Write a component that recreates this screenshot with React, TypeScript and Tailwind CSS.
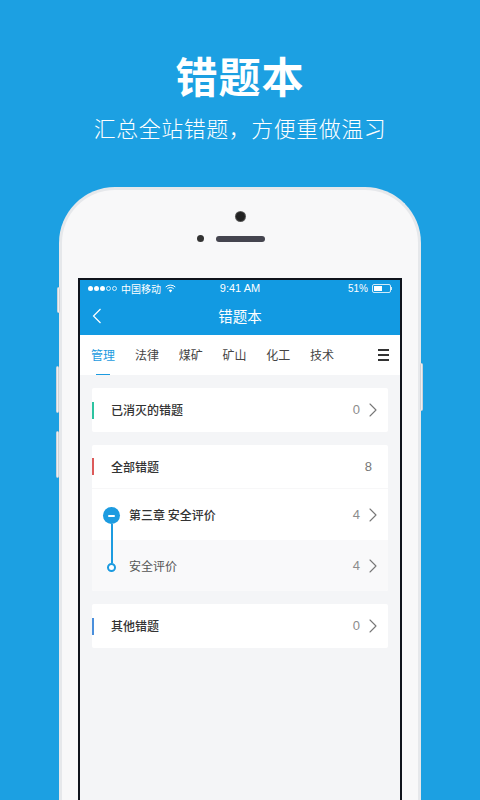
import { ChevronRight } from "lucide-react"

const font = { fontFamily: '"Noto Sans CJK SC", sans-serif' }
const tabs = ["法律", "煤矿", "矿山", "化工", "技术"]

function Arrow() {
  return <ChevronRight size={24} strokeWidth={1.1} className="ml-px mr-[3px] shrink-0 text-[#777]" />
}

function Row({ bar, title, count }: { bar: string; title: string; count: string }) {
  return (
    <div className="flex h-[44px] items-center rounded-[2px] bg-white">
      <span className={`h-[17px] w-[2px] ${bar}`} />
      <span className="ml-[17px] flex-1 text-[12px] font-medium text-[#333]">{title}</span>
      <span className="font-['Liberation_Sans',sans-serif] text-[13px] text-[#8c8c8c]">{count}</span>
      <Arrow />
    </div>
  )
}

function SideButton({ className }: { className: string }) {
  return <div className={`absolute w-[3px] rounded-[2px] border border-[#cfd3d8] bg-[#eef0f2] ${className}`} />
}

export default function App() {
  return (
    <div className="flex h-[800px] w-[480px] flex-col items-center overflow-hidden bg-[#1ca0e2]" style={font}>
      <h1 className="mt-[45px] text-[42px] leading-[60px] font-bold tracking-[1px] text-white">错题本</h1>
      <p className="mt-[7px] text-[22px] leading-[30px] font-light tracking-[0.5px] whitespace-nowrap text-white">
        {"汇总全站错题\uFF0C方便重做温习"}
      </p>

      <div className="relative mt-[45px] flex w-[362px] flex-1 flex-col items-center rounded-t-[56px] border-[3px] border-b-0 border-[#e6e8eb] bg-[#f8f8f9]">
        <SideButton className="-left-[5px] top-[97px] h-[26px]" />
        <SideButton className="-left-[6px] top-[176px] h-[47px]" />
        <SideButton className="-left-[6px] top-[241px] h-[47px]" />
        <SideButton className="-right-[5px] top-[173px] h-[48px]" />

        <div className="mt-[22px] size-[9px] rounded-full bg-[#222] ring-1 ring-[#555]" />
        <div className="relative mt-[15px] h-[6px] w-[49px] rounded-full bg-[#45454f]">
          <div className="absolute -left-[19px] top-[-1px] size-[7px] rounded-full bg-[#333]" />
        </div>

        <div className="mt-[36px] flex w-[324px] flex-1 flex-col border-x-2 border-t-2 border-[#10141c] bg-[#f4f5f7]">
          <div className="bg-[#129ae2] text-white">
            <div className="flex h-[17px] items-center px-[8px] text-[10px]">
              <div className="flex w-[104px] items-center">
                <span className="flex gap-[1px]">
                  <i className="size-[5px] rounded-full bg-white" />
                  <i className="size-[5px] rounded-full bg-white" />
                  <i className="size-[5px] rounded-full bg-white" />
                  <i className="size-[5px] rounded-full border border-white/80" />
                  <i className="size-[5px] rounded-full border border-white/80" />
                </span>
                <span className="ml-[4px] whitespace-nowrap">中国移动</span>
                <svg width="11" height="9" viewBox="0 0 11 9" fill="none" stroke="white" className="ml-[4px]">
                  <path d="M.7 3a7 7 0 0 1 9.6 0M2.3 4.8a4.6 4.6 0 0 1 6.4 0" />
                  <path d="M3.8 6.4a2.4 2.4 0 0 1 3.4 0L5.5 8.4z" fill="white" stroke="none" />
                </svg>
              </div>
              <span className="flex-1 text-center font-['Liberation_Sans',sans-serif] text-[11px]">9:41 AM</span>
              <div className="flex w-[104px] items-center justify-end">
                <span className="font-['Liberation_Sans',sans-serif]">51%</span>
                <span className="ml-[4px] h-[9px] w-[19px] rounded-[2px] border border-white/80 p-[1px]">
                  <span className="block h-full w-[8px] bg-white" />
                </span>
                <span className="h-[3px] w-[1px] bg-white/80" />
              </div>
            </div>
            <div className="relative flex h-[38px] items-center justify-center text-[14.5px]">
              <svg width="10" height="16" viewBox="0 0 10 16" fill="none" stroke="white" strokeWidth="1.2" className="absolute left-[12px] top-[11px]">
                <path d="M8.5 1 1.5 8l7 7" />
              </svg>
              错题本
            </div>
          </div>

          <div className="flex h-[40px] shrink-0 items-center bg-white pl-[11px] text-[12px] text-[#444]">
            <div className="relative mr-[20px] text-[#1c9be0]">
              管理
              <span className="absolute -bottom-[11px] left-[5px] h-[1.5px] w-[14px] bg-[#1c9be0]" />
            </div>
            {tabs.map((t) => (
              <span key={t} className="mr-[19.75px]">{t}</span>
            ))}
            <span className="ml-auto mr-[11px] flex w-[11px] flex-col gap-[3.5px]">
              <i className="h-[1.5px] bg-[#333]" />
              <i className="h-[1.5px] bg-[#333]" />
              <i className="h-[1.5px] bg-[#333]" />
            </span>
          </div>

          <div className="flex flex-col gap-[13px] px-[12px] pt-[13px]">
            <Row bar="bg-[#2cc3a0]" title="已消灭的错题" count="0" />

            <div className="overflow-hidden rounded-[2px] bg-white">
              <div className="flex h-[44px] items-center border-b border-[#f7f7f8]">
                <span className="h-[17px] w-[2px] bg-[#dc5a5a]" />
                <span className="ml-[17px] flex-1 text-[12px] font-medium text-[#333]">全部错题</span>
                <span className="mr-[16px] font-['Liberation_Sans',sans-serif] text-[13px] text-[#777]">8</span>
              </div>
              <div className="relative">
                {/* timeline over the two chapter rows */}
                <div className="absolute left-[11px] top-[18px] flex flex-col items-center">
                  <span className="flex size-[17px] items-center justify-center rounded-full bg-[#1c9be0]">
                    <span className="h-[2px] w-[7px] rounded-full bg-white" />
                  </span>
                  <span className="h-[39px] w-[2px] bg-[#1c9be0]" />
                  <span className="size-[9px] rounded-full border-2 border-[#1c9be0] bg-white" />
                </div>
                <div className="flex h-[51px] items-center pl-[37px]">
                  <span className="flex-1 text-[12px] font-medium text-[#333]">第三章 安全评价</span>
                  <span className="font-['Liberation_Sans',sans-serif] text-[13px] text-[#8c8c8c]">4</span>
                  <Arrow />
                </div>
                <div className="flex h-[51px] items-center bg-[#f9f9fa] pl-[37px]">
                  <span className="flex-1 text-[12px] text-[#555]">安全评价</span>
                  <span className="font-['Liberation_Sans',sans-serif] text-[13px] text-[#8c8c8c]">4</span>
                  <Arrow />
                </div>
              </div>
            </div>

            <Row bar="bg-[#4a8fdc]" title="其他错题" count="0" />
          </div>
        </div>
      </div>
    </div>
  )
}
